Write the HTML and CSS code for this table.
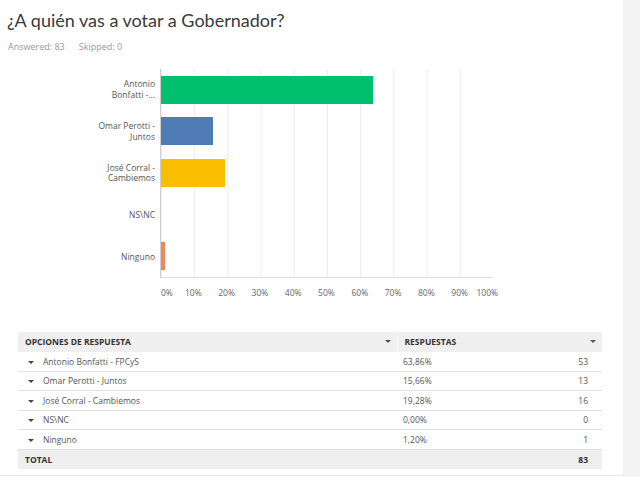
FILE: index.html
```html
<!DOCTYPE html>
<html lang="es">
<head>
<meta charset="utf-8">
<link rel="stylesheet" href="styles.css">
</head>
<body>
<div class="page">
  <main class="main">
    <h1 class="title">¿A quién vas a votar a Gobernador?</h1>
    <div class="meta"><span>Answered: 83</span><span>Skipped: 0</span></div>

    <div class="chart">
      <div class="labels">
        <div class="lab">Antonio<br>Bonfatti -...</div>
        <div class="lab">Omar Perotti -<br>Juntos</div>
        <div class="lab">José Corral -<br>Cambiemos</div>
        <div class="lab">NS\NC</div>
        <div class="lab">Ninguno</div>
      </div>
      <div class="plot-wrap">
        <div class="plot">
          <div class="row"><div class="bar green" style="width:63.86%"></div></div>
          <div class="row"><div class="bar blue" style="width:15.66%"></div></div>
          <div class="row"><div class="bar yellow" style="width:19.28%"></div></div>
          <div class="row"><div class="bar teal" style="width:0%"></div></div>
          <div class="row"><div class="bar orange" style="width:1.2%"></div></div>
        </div>
        <div class="axis">
          <div class="tick first"><span>0%</span></div>
          <div class="tick"><span>10%</span></div>
          <div class="tick"><span>20%</span></div>
          <div class="tick"><span>30%</span></div>
          <div class="tick"><span>40%</span></div>
          <div class="tick"><span>50%</span></div>
          <div class="tick"><span>60%</span></div>
          <div class="tick"><span>70%</span></div>
          <div class="tick"><span>80%</span></div>
          <div class="tick last"><span>90%</span><span class="end">100%</span></div>
        </div>
      </div>
    </div>

    <table class="results">
      <thead>
        <tr>
          <th class="c1"><div class="th-in">OPCIONES DE RESPUESTA<i class="tri"></i></div></th>
          <th class="c2" colspan="2"><div class="th-in">RESPUESTAS<i class="tri"></i></div></th>
        </tr>
      </thead>
      <tbody>
        <tr><td class="c1"><i class="caret"></i>Antonio Bonfatti - FPCyS</td><td class="c2">63,86%</td><td class="c3">53</td></tr>
        <tr><td class="c1"><i class="caret"></i>Omar Perotti - Juntos</td><td class="c2">15,66%</td><td class="c3">13</td></tr>
        <tr><td class="c1"><i class="caret"></i>José Corral - Cambiemos</td><td class="c2">19,28%</td><td class="c3">16</td></tr>
        <tr><td class="c1"><i class="caret"></i>NS\NC</td><td class="c2">0,00%</td><td class="c3">0</td></tr>
        <tr><td class="c1"><i class="caret"></i>Ninguno</td><td class="c2">1,20%</td><td class="c3">1</td></tr>
      </tbody>
      <tfoot>
        <tr><td class="c1">TOTAL</td><td class="c2"></td><td class="c3">83</td></tr>
      </tfoot>
    </table>
  </main>
  <aside class="side"></aside>
</div>
</body>
</html>
```

FILE: styles.css
```css
* { box-sizing: border-box; }
html, body { margin: 0; padding: 0; background: #fff; }
body { font-family: "Open Sans", "Liberation Sans", sans-serif; color: #333; }

.page { display: flex; height: 477px; overflow: hidden; }
.main { width: 623px; border-bottom: 1px solid #e6e6e6; height: 476px; }
.side { flex: 1; background: #f3f3f3; }

.title {
  margin: 0;
  padding: 7px 0 0 7px;
  font-family: Lato, "Open Sans", sans-serif;
  font-size: 18px;
  font-weight: 400;
  line-height: 26px;
  color: #3a3a3a;
}
.meta {
  display: flex;
  gap: 14px;
  padding: 8px 0 0 8px;
  font-size: 9px;
  line-height: 12px;
  color: #999;
}

.chart { display: flex; margin-top: 16px; }
.labels { width: 160px; display: flex; flex-direction: column; padding-right: 5px; }
.lab {
  height: 41.8px;
  display: flex; align-items: center; justify-content: flex-end;
  text-align: right;
  font-size: 8.5px; line-height: 10.5px; color: #555;
}
.plot-wrap { width: 333px; }
.plot {
  height: 209px;
  border-left: 1px solid #cfcfcf;
  border-bottom: 1px solid #dcdcdc;
  background-image: linear-gradient(to right, #ececec 1px, transparent 1px);
  background-size: 10% 100%;
  display: flex; flex-direction: column;
}
.row { height: 41.8px; display: flex; align-items: center; }
.bar { height: 28px; }
.green { background: #00bf6f; }
.blue { background: #507cb6; }
.yellow { background: #f9be00; }
.teal { background: #6bc8cd; }
.orange { background: #f0875a; }

.axis { display: flex; margin-top: 10px; font-size: 8.5px; color: #666; line-height: 10px; }
.tick { width: 10%; display: flex; justify-content: space-between; }
.tick span { transform: translateX(-50%); }
.tick.first span { transform: none; margin-left: 1px; }
.tick .end { transform: none; }

.results {
  margin: 34px 0 0 18px;
  width: 584px;
  border-collapse: collapse;
  font-size: 8.5px;
  color: #555;
}
.results th, .results td { padding: 0; height: 19.5px; }
.results thead th {
  background: #efefef;
  text-align: left;
  font-weight: 700;
  color: #333;
  font-size: 8.5px;
}
.results .c1 { width: 379px; }
.results .c2 { width: 145px; }
.results .c3 { width: 60px; }
.results thead .c1 { border-right: 1px solid #fff; }
.th-in { display: flex; justify-content: space-between; align-items: center; padding-left: 7px; padding-right: 6px; }
.tri { display: inline-block; width: 0; height: 0; border-left: 3px solid transparent; border-right: 3px solid transparent; border-top: 3px solid #555; }

.results tbody td { border-bottom: 1px solid #e2e2e2; }
.results tbody .c1 { padding-left: 10px; }
.results tbody .c2, .results tfoot .c2 { padding-left: 6px; }
.results .c3 { text-align: right; padding-right: 14px; }
.caret { display: inline-block; width: 0; height: 0; border-left: 3px solid transparent; border-right: 3px solid transparent; border-top: 3.5px solid #444; vertical-align: middle; margin-right: 9px; }

.results tfoot td { background: #efefef; font-weight: 700; color: #333; font-size: 8.5px; }
.results tfoot .c1 { padding-left: 7px; }
```
